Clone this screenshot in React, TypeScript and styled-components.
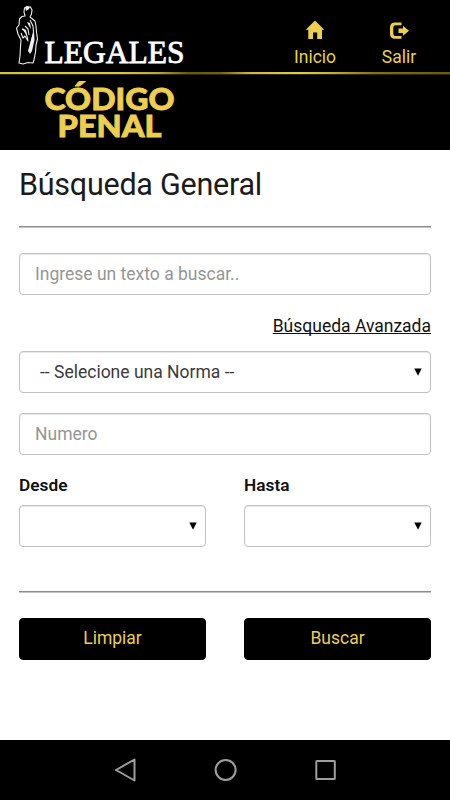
import React from 'react';
import styled, { createGlobalStyle } from 'styled-components';

const gold = '#edcf50';

const GlobalStyle = createGlobalStyle`
  * { box-sizing: border-box; }
  body { margin: 0; background: #fff; font-family: Roboto, "Open Sans", sans-serif; }
`;

const Screen = styled.div`
  width: 450px;
  height: 800px;
  display: flex;
  flex-direction: column;
  overflow: hidden;
  background: #fff;
  color: #1b1b1b;
  font-size: 17.5px;
`;

const TopBar = styled.header`
  height: 72px;
  flex: none;
  display: flex;
  justify-content: space-between;
  background: #000;
`;

const Brand = styled.svg`
  display: block;
  width: 200px;
  height: 72px;
`;

const Menu = styled.nav`
  display: grid;
  grid-template-columns: 84px 84px;
  padding: 20px 9px 0 0;
`;

const MenuItem = styled.a`
  display: flex;
  flex-direction: column;
  align-items: center;
  gap: 6px;
  color: ${gold};
  line-height: 22px;
  svg { display: block; width: 20px; height: 20px; fill: currentColor; }
`;

const GoldRule = styled.div`
  height: 3px;
  flex: none;
  border-bottom: 1px solid #2b270c;
  background: linear-gradient(90deg, #d2c43c 0, #d8ca3c 120px, #b5a336 160px, #665908 188px, #70620c 220px, #c9b94a 250px, #dfd040 300px, #c4b438 330px, #80701a 375px, #6a5c0c 450px);
`;

const CodeBanner = styled.div`
  height: 75px;
  flex: none;
  background: #000;
  svg { display: block; }
`;

const Content = styled.main`
  flex: 1;
  display: flex;
  flex-direction: column;
  padding: 0 19px;
`;

const Title = styled.h1`
  margin: 17px 0 0;
  height: 36px;
  font-size: 30.5px;
  line-height: 36px;
  font-weight: 400;
  letter-spacing: -0.25px;
  white-space: nowrap;
`;

const Divider = styled.hr<{ $top: number }>`
  width: 100%;
  height: 2px;
  flex: none;
  margin: ${p => p.$top}px 0 25px;
  border: 0;
  border-top: 1px solid #8e8e8e;
  border-bottom: 1px solid #c4c4c4;
`;

const Field = styled.div<{ $top?: number; $inset?: number; $placeholder?: boolean }>`
  height: 42px;
  flex: none;
  display: flex;
  align-items: center;
  justify-content: space-between;
  margin-top: ${p => p.$top ?? 0}px;
  padding: 0 8px 0 ${p => p.$inset ?? 15}px;
  border: 1px solid #c1c1c1;
  border-radius: 4px;
  box-shadow: inset 0 1px 1px rgba(0, 0, 0, 0.1);
  color: ${p => (p.$placeholder ? '#959595' : '#3a3a3a')};
  white-space: nowrap;
  svg { display: block; margin-left: auto; fill: #000; }
`;

const AdvancedLink = styled.a`
  align-self: flex-end;
  height: 20px;
  margin: 21px 0 -1px;
  line-height: 20px;
  color: #111;
  text-decoration: underline;
  text-decoration-thickness: 1px;
  text-underline-offset: 1px;
  text-decoration-skip-ink: none;
`;

const Columns = styled.div<{ $top?: number }>`
  display: grid;
  grid-template-columns: 1fr 1fr;
  column-gap: 38px;
  margin-top: ${p => p.$top ?? 0}px;
`;

const Label = styled.div`
  height: 20px;
  line-height: 20px;
  font-weight: 600;
  font-size: 17.3px;
  color: #111;
`;

const Button = styled.button`
  height: 42px;
  padding: 0 0 2px;
  border: 1px solid #000;
  border-radius: 4px;
  background: #000;
  color: ${gold};
  font: inherit;
`;

const NavBar = styled.footer`
  height: 60px;
  flex: none;
  display: flex;
  align-items: center;
  justify-content: center;
  gap: 76px;
  background: #000;
  svg { display: block; width: 24px; height: 24px; fill: none; stroke: #9e9e9e; stroke-width: 2; stroke-linejoin: round; }
`;

const Arrow = () => (
  <svg width="8" height="8" viewBox="0 0 8 8"><path d="M0.3 0.5H7.7L4 7.8Z" /></svg>
);

export default function App() {
  return (
    <>
      <GlobalStyle />
      <Screen>
        <TopBar>
          <Brand viewBox="0 0 200 72">
            <g fill="none" stroke="#eee" strokeWidth="1.100" strokeLinejoin="round">
              <path d="M25 16 24 12 24.500 8 27 6.500 30.500 7 32 10 31.500 14 30 17 32.500 19 35 21 36 26 36.500 32 37.500 39 36 45 35.500 52 34 60 33 63 28 62.500 23 64 19 63 20 56 20.500 47 21 40 18 34 16.500 28 19 25 19.500 19 22 16.500Z" />
              <path d="M22 29 25 31 27 36 28 41 25 36 23 38 21 33M25 26 28 29 29 35M30 20 33 26 33.500 32 31 43" />
            </g>
            <path fill="#eee" d="M31.500 38 34 31 34.500 40 32 51 30 54 28 51ZM22 28 26 30 27 35 25 33ZM27 22 30 23 31 29 29 26ZM26 11 25 7 30 7 29 9Z" />
            <text x="44.500" y="62.500" textLength="140" lengthAdjust="spacingAndGlyphs" fill="#fff" stroke="#fff" strokeWidth=".8" fontFamily="Liberation Serif, serif" fontSize="31">LEGALES</text>
          </Brand>
          <Menu>
            <MenuItem>
              <svg viewBox="0 0 20 20"><path d="M10 .4 19.300 9.800H17V19H12.200V12.500H8V19H3.300V9.800H.7Z" /></svg>
              Inicio
            </MenuItem>
            <MenuItem>
              <svg viewBox="0 0 20 20"><path d="M12.500 2.500V5.300H6.500Q4.300 5.300 4.300 7.500V13.800Q4.300 16 6.500 16H12.500V18.800H6Q1 18.800 1 13.800V7.500Q1 2.500 6 2.500ZM14 5.800 20 10.800 14 15.800V13H9.500V8.600H14Z" /></svg>
              Salir
            </MenuItem>
          </Menu>
        </TopBar>
        <GoldRule />
        <CodeBanner>
          <svg width="200" height="75" viewBox="0 75 200 75" fill={gold} stroke={gold} strokeWidth=".8" fontFamily="Lato, sans-serif" fontWeight="900" fontSize="30.500">
            <text x="44.500" y="109.500" textLength="130" lengthAdjust="spacingAndGlyphs">CÓDIGO</text>
            <text x="57.500" y="137.200" textLength="104" lengthAdjust="spacingAndGlyphs">PENAL</text>
          </svg>
        </CodeBanner>
        <Content>
          <Title>Búsqueda General</Title>
          <Divider $top={23} />
          <Field $placeholder>Ingrese un texto a buscar..</Field>
          <AdvancedLink>Búsqueda Avanzada</AdvancedLink>
          <Field $top={16} $inset={20}>-- Selecione una Norma --<Arrow /></Field>
          <Field $top={20} $placeholder>Numero</Field>
          <Columns $top={20}>
            <div><Label>Desde</Label><Field $top={10}><Arrow /></Field></div>
            <div><Label>Hasta</Label><Field $top={10}><Arrow /></Field></div>
          </Columns>
          <Divider $top={44} />
          <Columns>
            <Button>Limpiar</Button>
            <Button>Buscar</Button>
          </Columns>
        </Content>
        <NavBar>
          <svg viewBox="0 0 24 24"><path d="M21.500 1.500V22.500L3 12Z" /></svg>
          <svg viewBox="0 0 24 24"><circle cx="12.600" cy="12" r="10" /></svg>
          <svg viewBox="0 0 24 24"><rect x="3.300" y="3" width="18.500" height="18" rx=".5" /></svg>
        </NavBar>
      </Screen>
    </>
  );
}
